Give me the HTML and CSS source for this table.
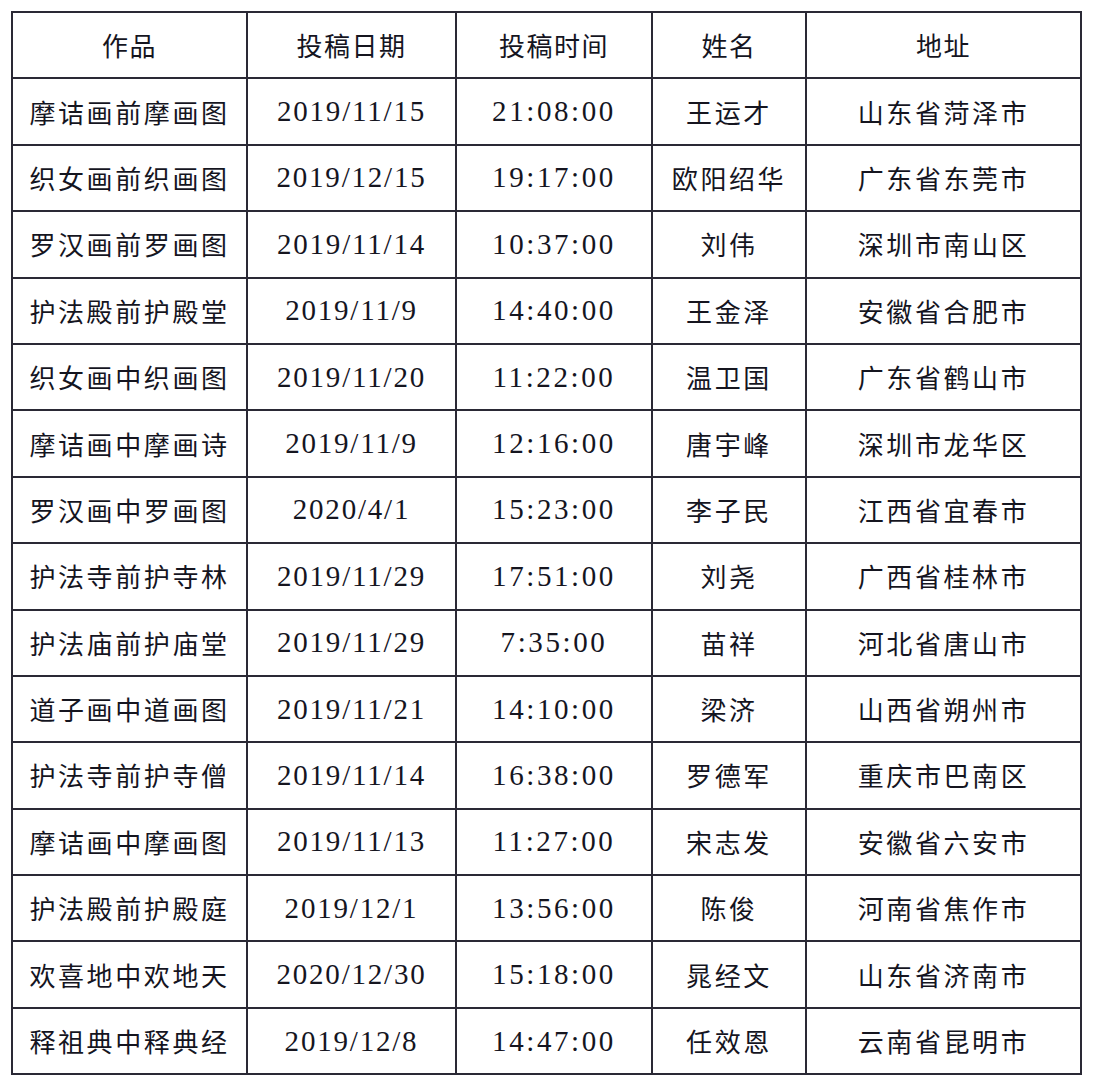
FILE: index.html
```html
<!DOCTYPE html>
<html lang="zh">
<head>
<meta charset="utf-8">
<title>投稿</title>
<link rel="stylesheet" href="styles.css">
</head>
<body>
<table class="sheet">
  <colgroup>
    <col class="c-work"><col class="c-date"><col class="c-time"><col class="c-name"><col class="c-addr">
  </colgroup>
  <thead>
    <tr><th>作品</th><th>投稿日期</th><th>投稿时间</th><th>姓名</th><th>地址</th></tr>
  </thead>
  <tbody>
    <tr><td>摩诘画前摩画图</td><td class="num">2019/11/15</td><td class="num t">21:08:00</td><td>王运才</td><td>山东省菏泽市</td></tr>
    <tr><td>织女画前织画图</td><td class="num">2019/12/15</td><td class="num t">19:17:00</td><td>欧阳绍华</td><td>广东省东莞市</td></tr>
    <tr><td>罗汉画前罗画图</td><td class="num">2019/11/14</td><td class="num t">10:37:00</td><td>刘伟</td><td>深圳市南山区</td></tr>
    <tr><td>护法殿前护殿堂</td><td class="num">2019/11/9</td><td class="num t">14:40:00</td><td>王金泽</td><td>安徽省合肥市</td></tr>
    <tr><td>织女画中织画图</td><td class="num">2019/11/20</td><td class="num t">11:22:00</td><td>温卫国</td><td>广东省鹤山市</td></tr>
    <tr><td>摩诘画中摩画诗</td><td class="num">2019/11/9</td><td class="num t">12:16:00</td><td>唐宇峰</td><td>深圳市龙华区</td></tr>
    <tr><td>罗汉画中罗画图</td><td class="num">2020/4/1</td><td class="num t">15:23:00</td><td>李子民</td><td>江西省宜春市</td></tr>
    <tr><td>护法寺前护寺林</td><td class="num">2019/11/29</td><td class="num t">17:51:00</td><td>刘尧</td><td>广西省桂林市</td></tr>
    <tr><td>护法庙前护庙堂</td><td class="num">2019/11/29</td><td class="num t">7:35:00</td><td>苗祥</td><td>河北省唐山市</td></tr>
    <tr><td>道子画中道画图</td><td class="num">2019/11/21</td><td class="num t">14:10:00</td><td>梁济</td><td>山西省朔州市</td></tr>
    <tr><td>护法寺前护寺僧</td><td class="num">2019/11/14</td><td class="num t">16:38:00</td><td>罗德军</td><td>重庆市巴南区</td></tr>
    <tr><td>摩诘画中摩画图</td><td class="num">2019/11/13</td><td class="num t">11:27:00</td><td>宋志发</td><td>安徽省六安市</td></tr>
    <tr><td>护法殿前护殿庭</td><td class="num">2019/12/1</td><td class="num t">13:56:00</td><td>陈俊</td><td>河南省焦作市</td></tr>
    <tr><td>欢喜地中欢地天</td><td class="num">2020/12/30</td><td class="num t">15:18:00</td><td>晁经文</td><td>山东省济南市</td></tr>
    <tr><td>释祖典中释典经</td><td class="num">2019/12/8</td><td class="num t">14:47:00</td><td>任效恩</td><td>云南省昆明市</td></tr>
  </tbody>
</table>
</body>
</html>
```
FILE: styles.css
```css
html, body {
  margin: 0;
  padding: 0;
  background: #ffffff;
}
body {
  padding: 11px 0 0 11px;
  font-family: "Noto Sans CJK SC", "Noto Sans", sans-serif;
  color: #15151f;
}
.sheet {
  border-collapse: collapse;
  table-layout: fixed;
  width: 1069px;
}
.c-work { width: 235px; }
.c-date { width: 209px; }
.c-time { width: 196px; }
.c-name { width: 154px; }
.c-addr { width: 275px; }
.sheet th, .sheet td {
  border: 2px solid #2a2935;
  height: 64.4px;
  padding: 0;
  text-align: center;
  vertical-align: middle;
  font-size: 26px;
  font-weight: 400;
  letter-spacing: 2.6px;
  line-height: 1;
  white-space: nowrap;
}
.sheet th {
  letter-spacing: 1.5px;
}
.sheet td.num {
  font-family: "Liberation Serif", "Times New Roman", serif;
  font-size: 29px;
  letter-spacing: 1.8px;
}
.sheet td.t {
  letter-spacing: 2.6px;
}
```
